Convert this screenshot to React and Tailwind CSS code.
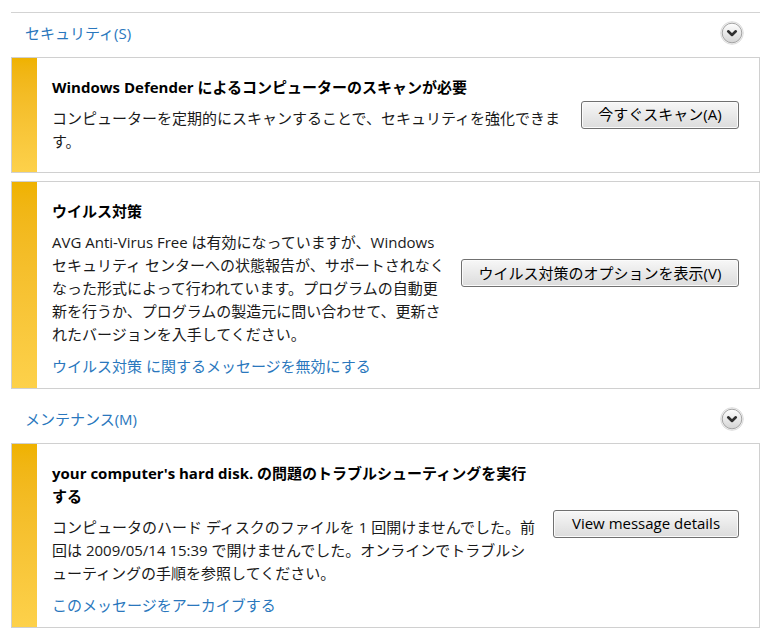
const font = { fontFamily: '"Open Sans", "Noto Sans CJK JP", sans-serif' };

const Chevron = () => (
  <svg width="24" height="24" viewBox="0 0 24 24">
    <defs>
      <linearGradient id="chev" x1="0" y1="0" x2="0" y2="1">
        <stop offset="0" stopColor="#ffffff" />
        <stop offset="1" stopColor="#d4d4d4" />
      </linearGradient>
    </defs>
    <circle cx="12" cy="12" r="11.3" fill="#f4f4f4" stroke="#dcdcdc" />
    <circle cx="12" cy="12" r="9.8" fill="url(#chev)" stroke="#a3a3a3" />
    <path
      d="M8.2 10.3 L12 14 L15.8 10.3"
      fill="none"
      stroke="#2f2f2f"
      strokeWidth="2.6"
      strokeLinecap="round"
      strokeLinejoin="round"
    />
  </svg>
);

const SectionHeader = ({ label, className = "" }) => (
  <div className={`flex items-center justify-between h-[44px] pb-1 pl-[14px] pr-[16px] ${className}`}>
    <span className="text-[15px] text-[#2a77bd]">{label}</span>
    <Chevron />
  </div>
);

const Card = ({ title, children, button, buttonWidth, link, className = "" }) => (
  <div className={`flex border border-[#d0d0d0] bg-white ${className}`}>
    <div className="w-[25px] shrink-0 bg-gradient-to-b from-[#efb200] to-[#fdd14a]" />
    <div className="flex-1 min-w-0 pl-[15px] pr-[20px] pt-[18px] pb-[10px]">
      <div className="flex items-center pb-[9px]">
        <div className="flex-1 min-w-0">
          <div className="font-bold text-[15px] leading-[23px] text-black mb-2 whitespace-nowrap">{title}</div>
          <div className="text-[15px] leading-[23px] text-[#1a1a1a] whitespace-nowrap">{children}</div>
        </div>
        <button
          className={`${buttonWidth} shrink-0 ml-3 h-[28px] rounded-[3px] border border-[#707070] bg-gradient-to-b from-[#f7f7f7] to-[#dcdcdc] shadow-[inset_0_0_0_1px_#fbfbfb] text-[15px] text-black`}
          style={font}
        >
          {button}
        </button>
      </div>
      {link && <div className="text-[15px] leading-[23px] text-[#2a77bd]">{link}</div>}
    </div>
  </div>
);

export default function App() {
  return (
    <div className="min-h-[641px] w-[775px] bg-white" style={font}>
      <div className="ml-[11px] w-[749px] pt-[12px]">
        <div className="border-t border-[#d3d3d3]">
          <SectionHeader label="セキュリティ(S)" />
          <Card
            className="mb-2"
            title="Windows Defender によるコンピューターのスキャンが必要"
            button="今すぐスキャン(A)"
            buttonWidth="w-[158px]"
          >
            コンピューターを定期的にスキャンすることで、セキュリティを強化できま
            <br />
            す。
          </Card>
          <Card
            title="ウイルス対策"
            button="ウイルス対策のオプションを表示(V)"
            buttonWidth="w-[278px]"
            link="ウイルス対策 に関するメッセージを無効にする"
          >
            AVG Anti-Virus Free は有効になっていますが、Windows
            <br />
            セキュリティ センターへの状態報告が、サポートされなく
            <br />
            なった形式によって行われています。プログラムの自動更
            <br />
            新を行うか、プログラムの製造元に問い合わせて、更新さ
            <br />
            れたバージョンを入手してください。
          </Card>
          <SectionHeader label="メンテナンス(M)" className="mt-[10px]" />
          <Card
            title={
              <>
                your computer's hard disk. の問題のトラブルシューティングを実行
                <br />
                する
              </>
            }
            button="View message details"
            buttonWidth="w-[186px]"
            link="このメッセージをアーカイブする"
          >
            コンピュータのハード ディスクのファイルを 1 回開けませんでした。前
            <br />
            回は 2009/05/14 15:39 で開けませんでした。オンラインでトラブルシ
            <br />
            ューティングの手順を参照してください。
          </Card>
        </div>
      </div>
    </div>
  );
}
